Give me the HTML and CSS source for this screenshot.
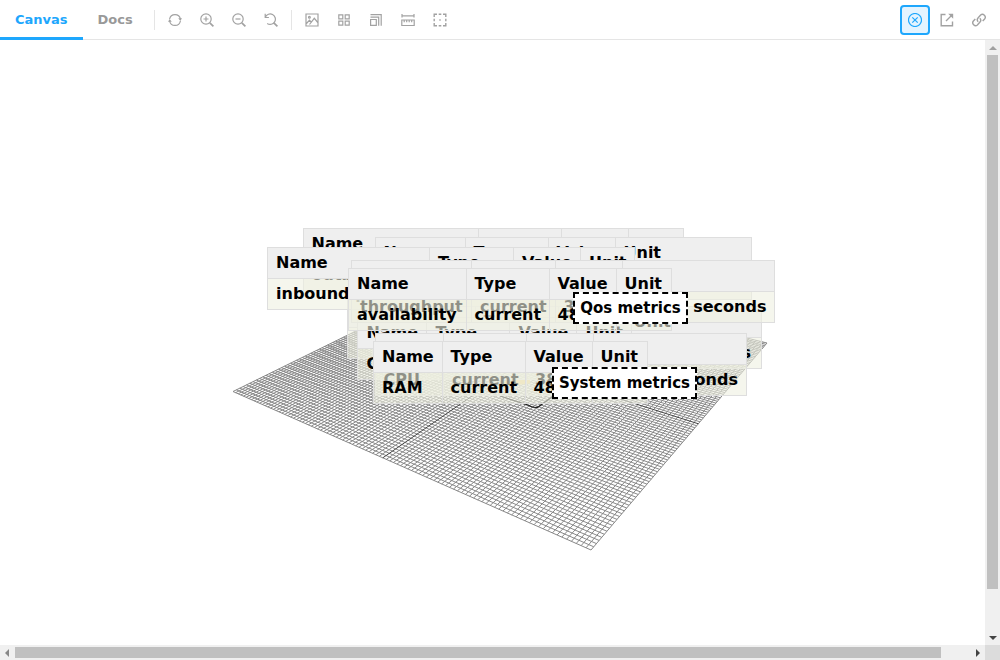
FILE: index.html
```html
<!DOCTYPE html>
<html lang="en">
<head>
<meta charset="utf-8">
<title>Canvas</title>
<link rel="stylesheet" href="styles.css">
</head>
<body>
<header class="toolbar">
  <nav class="tabs"><a class="tab active">Canvas</a><a class="tab">Docs</a></nav>
  <span class="divider"></span>
  <div class="tools">
    <button><svg viewBox="0 0 14 14"><path d="M1.6 6A5.5 5.5 0 0 1 12.4 6M12.4 8A5.5 5.5 0 0 1 1.6 8"/><path class="solid" d="M10.3 5.3h3.7L12.3 8zM0 8.7h3.7L1.7 6z"/></svg></button>
    <button><svg viewBox="0 0 14 14"><circle cx="6" cy="6" r="5.2"/><path d="M3.5 6h5M6 3.5v5"/><path class="thick" d="M9.8 9.8l3.6 3.6"/></svg></button>
    <button><svg viewBox="0 0 14 14"><circle cx="6" cy="6" r="5.2"/><path d="M3.5 6h5"/><path class="thick" d="M9.8 9.8l3.6 3.6"/></svg></button>
    <button><svg viewBox="0 0 14 14"><path d="M1.2 .8v3.7h3.7M1.4 4.1A5.2 5.2 0 1 1 3.2 10.4"/><path class="thick" d="M9.8 9.8l3.6 3.6"/></svg></button>
  </div>
  <span class="divider second"></span>
  <div class="tools">
    <button><svg viewBox="0 0 14 14"><path d="M1 1h12v12H1zM1.5 10.5l3-3.3 2.2 2.4M4.5 11.5L9.3 5.3l3.5 4.2"/><circle cx="4.4" cy="4.3" r=".9"/></svg></button>
    <button><svg viewBox="0 0 14 14"><path d="M1.8 1.8h4v4h-4zM8.2 1.8h4v4h-4zM1.8 8.2h4v4h-4zM8.2 8.2h4v4h-4z"/></svg></button>
    <button><svg viewBox="0 0 14 14"><path d="M1.6 6.5h5.7v5.9H1.6zM1.5 4.1h8.2v8.7M1.5 1.7h10.7v11.1"/></svg></button>
    <button><svg viewBox="0 0 14 14"><path d="M1 1v3.5M13 1v3.5M1 2.8h12M.8 7h12.4v5.5H.8zM3.2 7v2.2M5.7 7v2.2M8.2 7v2.2M10.7 7v2.2"/></svg></button>
    <button><svg class="bold" viewBox="0 0 14 14"><path d="M1.2 4V1.2H4M10 1.2h2.8V4M12.8 10v2.8H10M4 12.8H1.2V10M5.7 1.2h2.6M5.7 12.8h2.6M1.2 5.7v2.6M12.8 5.7v2.6M6.3 7h1.4"/></svg></button>
  </div>
  <div class="tools end">
    <button class="selected"><svg viewBox="0 0 14 14"><circle cx="7" cy="7" r="6.5"/><path d="M4.3 4.3l5.4 5.4M9.7 4.3L4.3 9.7"/></svg></button>
    <button><svg class="bold" viewBox="0 0 14 14"><path d="M5.5 1.5H1.2v11.3h11.3V8.5M6 8l6-6"/><path class="solid" d="M8.2 .8h5v5z"/></svg></button>
    <button><svg class="bold" viewBox="0 0 14 14"><path d="M6.2 8.8a2.8 2.8 0 0 1-.2-3.8l2.6-3a2.85 2.85 0 0 1 4 4L10.7 8M7.8 5.2a2.8 2.8 0 0 1 .2 3.8l-2.6 3a2.85 2.85 0 0 1-4-4L3.3 6"/></svg></button>
  </div>
</header>
<main class="frame">
  <section class="scene" id="scene">
    <svg class="grid" id="grid" viewBox="0 40 985 605"></svg>
  </section>
  <div class="vbar"><i class="up"></i><b></b><i class="down"></i></div>
  <div class="hbar"><i class="left"></i><b></b><i class="right"></i></div>
  <div class="corner"></div>
</main>
<script src="scene.js"></script>
</body>
</html>
```
FILE: styles.css
```css
* { box-sizing: border-box; }
body { margin: 0; width: 1000px; height: 660px; overflow: hidden; background: #fff; font-family: "DejaVu Sans", sans-serif; display: flex; flex-direction: column; }
.toolbar { height: 40px; flex: none; display: flex; align-items: flex-start; border-bottom: 1px solid #e5e5e5; padding-right: 7px; }
.tabs { display: flex; }
.tab { height: 40px; padding: 0 15px; font-size: 13px; font-weight: bold; line-height: 39px; color: #999; border-bottom: 3px solid transparent; }
.tab.active { color: #1ea7fd; border-bottom-color: #1ea7fd; }
.divider { width: 1px; height: 20px; margin: 10px 6px 0; background: #e5e5e5; }
.tools { display: flex; gap: 4px; padding-top: 6px; }
.tools button { width: 28px; height: 28px; padding: 0; border: 0; background: none; display: flex; align-items: center; justify-content: center; color: #a2a2a2; }
.tools.end { gap: 3px; padding-top: 5px; margin-left: auto; }
.tools.end button { width: 29px; height: 30px; }
.tools.end .selected { width: 30px; border: 2px solid #1ea7fd; border-radius: 4px; background: #e4f4ff; color: #1ea7fd; margin-right: -1px; }
.tools svg { width: 14px; height: 14px; fill: none; stroke: currentColor; stroke-width: 1.2; }
.tools svg.bold { stroke-width: 1.4; }
.tools .thick { stroke-width: 1.7; }
.tools .solid { fill: currentColor; stroke: none; }
.frame { flex: 1; display: grid; grid-template-columns: 985px 15px; grid-template-rows: 605px 15px; }
.scene { position: relative; overflow: hidden; }
.grid { display: block; width: 985px; height: 605px; }
.grid .line { stroke: #888; stroke-width: 1; }
.grid .axis { stroke: #444; stroke-width: 1; }
.grid .edge { fill: none; stroke: #222; stroke-width: 1.2; }
.grid .glow { stroke: #f0c040; stroke-width: 5; }
.metrics { position: absolute; border-right: 1px solid #dedede; border-bottom: 1px solid #dedede; font-size: 16px; font-weight: bold; color: #000; }
.metrics .row { display: flex; height: 31px; background: rgba(239, 240, 225, .6); }
.metrics .row.head { background: #efefef; }
.metrics .cell { border-left: 1px solid #dedede; border-top: 1px solid #dedede; padding-left: 8px; line-height: 29px; white-space: nowrap; overflow: hidden; flex: none; }
.metrics .head .cell { line-height: 30px; }
.label { position: absolute; height: 32px; border: 2px dashed #000; background: #fff; font-size: 15px; font-weight: bold; line-height: 28px; text-align: center; white-space: nowrap; }
.vbar, .hbar { background: #f0f0f0; display: flex; align-items: center; }
.vbar { flex-direction: column; }
.vbar b { width: 11px; height: 534px; background: #c0c0c0; }
.hbar b { height: 11px; width: 926px; background: #c0c0c0; }
.vbar i, .hbar i { width: 15px; height: 15px; flex: none; display: grid; place-items: center; }
.vbar i::before, .hbar i::before { content: ""; border: 4px solid transparent; }
.vbar .up::before { border-top: 0; border-bottom-color: #a0a0a0; }
.vbar .down { margin-top: auto; }
.vbar .down::before { border-bottom: 0; border-top-color: #444; }
.hbar .left::before { border-left: 0; border-right-color: #888; margin-right: 2px; }
.hbar .right { margin-left: auto; }
.hbar .right::before { border-right: 0; border-left-color: #444; }
.corner { background: #dcdcdc; }
```
FILE: scene.js
```js
const scene = document.getElementById('scene');
const grid = document.getElementById('grid');
const NS = 'http://www.w3.org/2000/svg';

// Perspective mapping of the unit square onto the floor corners.
const [A, B, C, D] = [[591, 550], [233, 391.5], [477, 271.5], [767, 343]];
const dx1 = B[0] - C[0], dx2 = D[0] - C[0], dx3 = A[0] - B[0] + C[0] - D[0];
const dy1 = B[1] - C[1], dy2 = D[1] - C[1], dy3 = A[1] - B[1] + C[1] - D[1];
const det = dx1 * dy2 - dx2 * dy1;
const g = (dx3 * dy2 - dx2 * dy3) / det, h = (dx1 * dy3 - dx3 * dy1) / det;
function project(u, v) {
  const w = g * u + h * v + 1;
  return [0, 1].map(i => ((B[i] - A[i] + g * B[i]) * u + (D[i] - A[i] + h * D[i]) * v + A[i]) / w);
}
function draw(tag, attrs) {
  const el = document.createElementNS(NS, tag);
  for (const k in attrs) el.setAttribute(k, attrs[k]);
  grid.appendChild(el);
}
function line(p, q, cls) {
  draw('line', { x1: p[0], y1: p[1], x2: q[0], y2: q[1], class: cls });
}
const N = 100;
for (let i = 0; i <= N; i++) {
  const t = i / N, cls = i === N / 2 ? 'axis' : 'line';
  line(project(t, 0), project(t, 1), cls);
  line(project(0, t), project(1, t), cls);
}
line([503, 384], [530, 381], 'glow');
draw('path', { class: 'edge', d: 'M500 396L528 405Q536 410 541 405L552 397' });

// x, y, column widths, row values
const tables = [
  [346.5, 296, [119, 83, 67, 55], null],
  [302.5, 227.5, [175, 83, 67, 55], ['outbound packets', 'current', '48', '']],
  [374.5, 237, [90, 83, 67, 136], ['latency', 'current', '38', 'milli seconds']],
  [267, 246.5, [162, 84, 67, 54], ['inbound packets', 'current', '48', '']],
  [371.5, 306, [103, 83, 67, 136], ['response', 'current', '38', 'milli seconds']],
  [357.4, 317, [69, 83, 67, 55], ['GPU', 'current', '48', '']],
  [351, 260.4, [120, 83.5, 67, 152.5], ['throughput', 'current', '38', 'micro- seconds']],
  [348, 268, [117.5, 83, 67, 55], ['availability', 'current', '48', '']],
  [374.5, 333, [68.5, 83, 67, 153], ['CPU', 'current', '38', 'micro- seconds']],
  [373, 341.4, [68.5, 83, 67, 55], ['RAM', 'current', '48', '']]
];
for (const [x, y, widths, values] of tables) {
  const table = document.createElement('div');
  table.className = 'metrics';
  table.style.left = x + 'px';
  table.style.top = (y - 40) + 'px';
  const head = values ? ['Name', 'Type', 'Value', 'Unit'] : ['', '', '', ''];
  [head, values || head].forEach((texts, r) => {
    const row = document.createElement('div');
    row.className = r ? 'row' : 'row head';
    texts.forEach((text, i) => {
      const cell = document.createElement('div');
      cell.className = 'cell';
      cell.style.width = widths[i] + 'px';
      cell.textContent = text;
      row.appendChild(cell);
    });
    table.appendChild(row);
  });
  scene.appendChild(table);
}
for (const [x, y, w, text] of [[573, 292, 115, 'Qos metrics'], [552, 367, 145, 'System metrics']]) {
  const label = document.createElement('div');
  label.className = 'label';
  label.style.left = x + 'px';
  label.style.top = (y - 40) + 'px';
  label.style.width = w + 'px';
  label.textContent = text;
  scene.appendChild(label);
}
```
